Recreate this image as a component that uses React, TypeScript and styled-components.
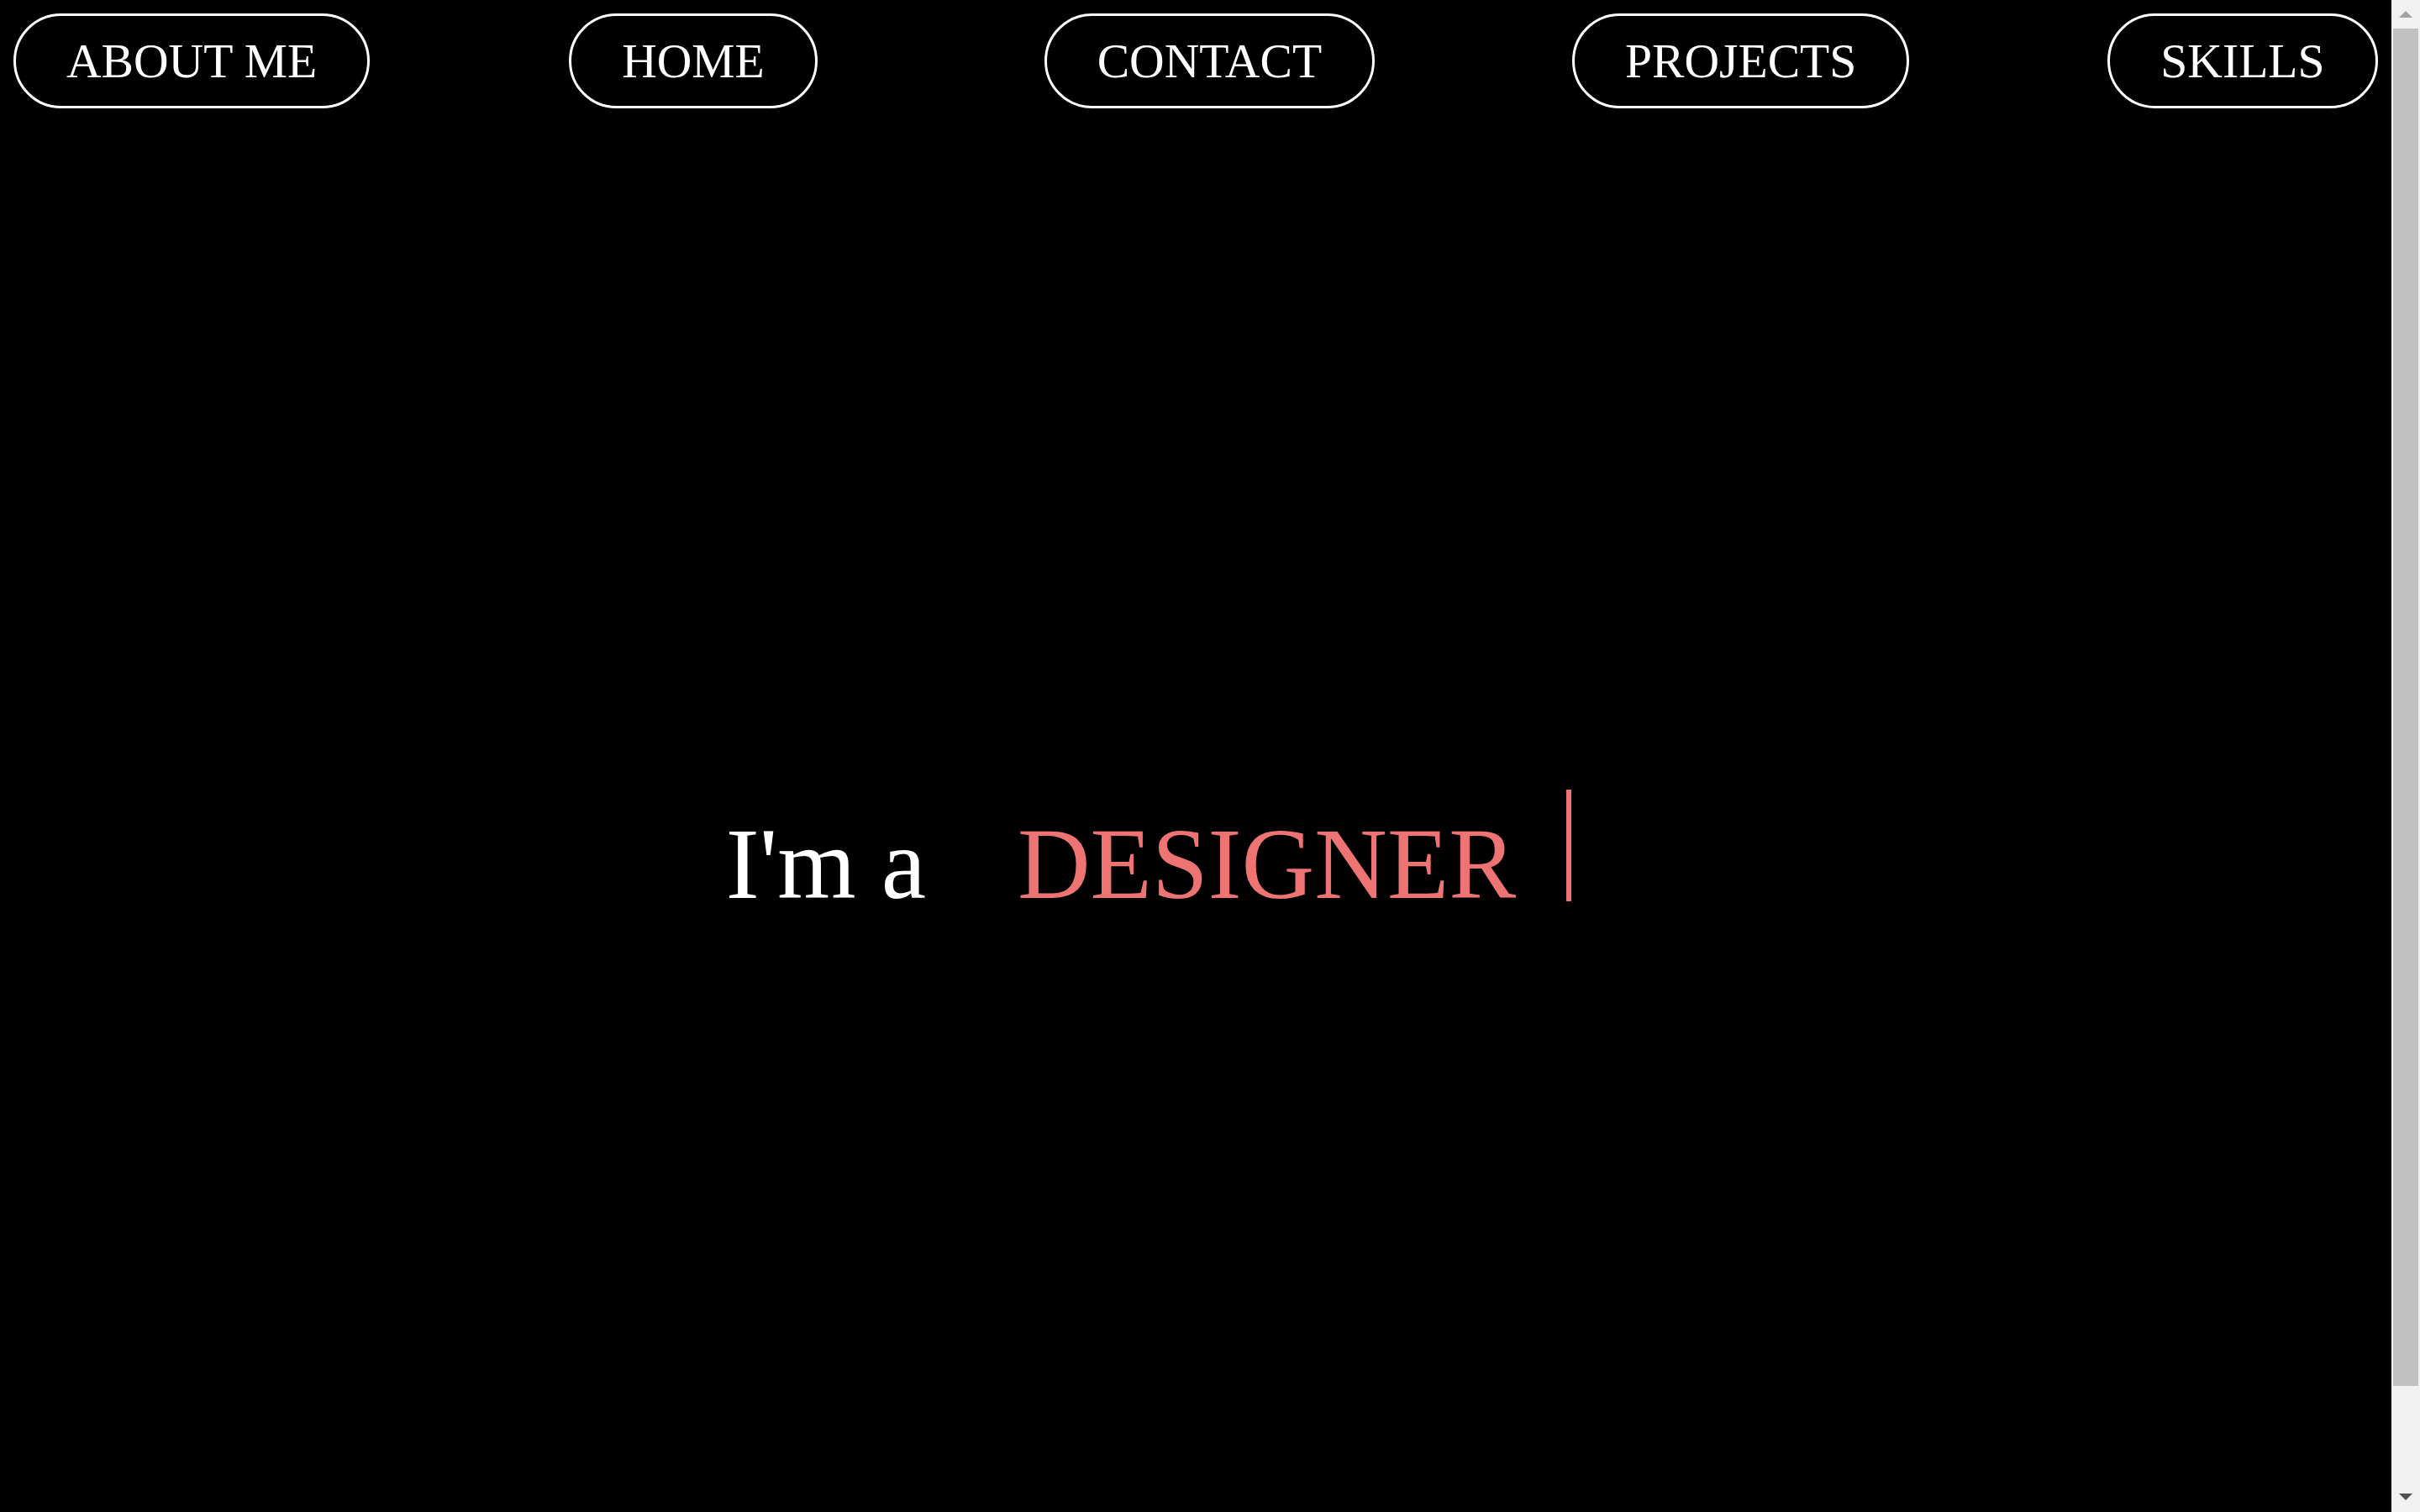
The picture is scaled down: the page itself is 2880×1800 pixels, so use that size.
import React from 'react';
import styled, { createGlobalStyle } from 'styled-components';

const GlobalStyle = createGlobalStyle`
  html, body {
    margin: 0;
    padding: 0;
    background: #000;
  }

  body {
    font-family: "Liberation Serif", "Times New Roman", serif;
    color: #fff;
  }
`;

const Page = styled.div`
  min-height: 100vh;
  padding-right: 34px;
  background: #000;
`;

const Nav = styled.nav`
  display: flex;
  align-items: center;
  padding: 16px 16px 0 16px;
`;

const NavButton = styled.a<{ $gap: number }>`
  display: inline-block;
  margin-left: ${(p) => p.$gap}px;
  padding: 21px 60px;
  border: 3px solid #fff;
  border-radius: 999px;
  font-size: 57.6px;
  line-height: normal;
  color: #fff;
  text-decoration: none;
  white-space: nowrap;
  cursor: pointer;
`;

const Hero = styled.section`
  height: 100vh;
  display: flex;
  align-items: center;
  justify-content: center;
`;

const Headline = styled.h1`
  display: flex;
  align-items: flex-start;
  margin: 0;
  padding-right: 112px;
  font-size: 120px;
  font-weight: normal;
  line-height: 1.15;
`;

const Lead = styled.span`
  color: #fff;
  white-space: pre;
`;

const Typed = styled.span`
  margin-left: 109px;
  color: #ee7474;
`;

const Cursor = styled.span`
  display: block;
  width: 6px;
  height: 133px;
  margin-left: 60px;
  margin-top: -20px;
  background: #ee7474;
`;

/* fake browser scrollbar, drawn over the right edge */
const Scrollbar = styled.div`
  position: fixed;
  top: 0;
  right: 0;
  width: 34px;
  height: 100vh;
  display: flex;
  flex-direction: column;
  background: #f1f1f1;
`;

const ScrollArrow = styled.div`
  height: 34px;
  flex: none;
  display: flex;
  align-items: center;
  justify-content: center;
`;

const ScrollTrack = styled.div`
  flex: 1;
  padding: 0 2px;
`;

const ScrollThumb = styled.div`
  height: 93.3%;
  background: #c1c1c1;
`;

const links = [
  { label: 'ABOUT ME', gap: 0 },
  { label: 'HOME', gap: 237 },
  { label: 'CONTACT', gap: 270 },
  { label: 'PROJECTS', gap: 235 },
  { label: 'SKILLS', gap: 236 },
];

const App: React.FC = () => {
  return (
    <Page>
      <GlobalStyle />
      <Nav>
        {links.map((link) => (
          <NavButton key={link.label} $gap={link.gap}>
            {link.label}
          </NavButton>
        ))}
      </Nav>
      <Hero>
        <Headline>
          <Lead>I'm a</Lead>
          <Typed>DESIGNER</Typed>
          <Cursor />
        </Headline>
      </Hero>
      <Scrollbar>
        <ScrollArrow>
          <svg width="16" height="8" viewBox="0 0 16 8">
            <polygon points="0,8 8,0 16,8" fill="#a3a3a3" />
          </svg>
        </ScrollArrow>
        <ScrollTrack>
          <ScrollThumb />
        </ScrollTrack>
        <ScrollArrow>
          <svg width="16" height="8" viewBox="0 0 16 8" style={{ marginTop: -2 }}>
            <polygon points="0,0 16,0 8,8" fill="#505050" />
          </svg>
        </ScrollArrow>
      </Scrollbar>
    </Page>
  );
};

export default App;
